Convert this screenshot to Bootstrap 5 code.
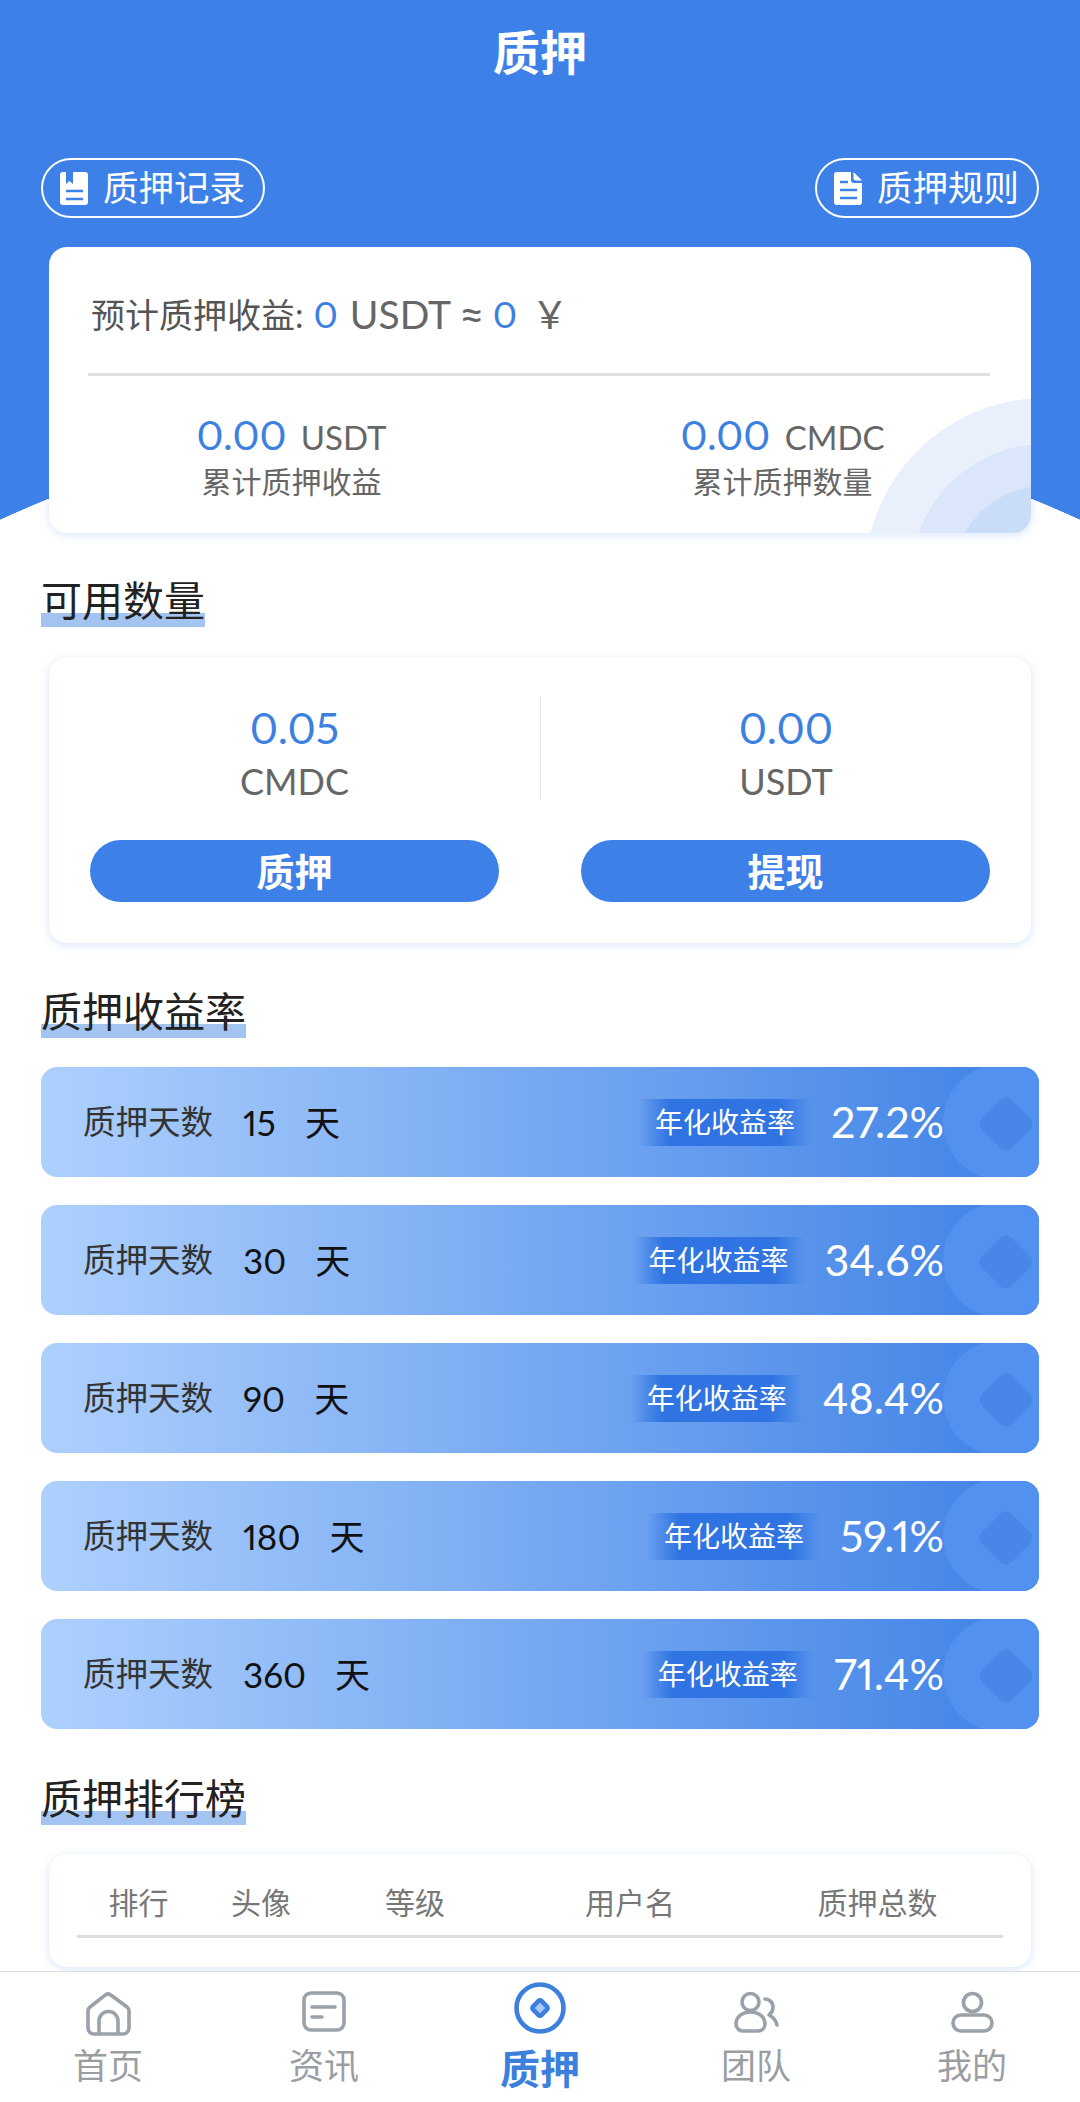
<!DOCTYPE html>
<html lang="zh-CN">
<head>
    <meta charset="UTF-8">
    <meta name="viewport" content="width=device-width, initial-scale=1.0">
    <title>质押</title>
    <link href="https://cdn.jsdelivr.net/npm/bootstrap@5.3.2/dist/css/bootstrap.min.css" rel="stylesheet">
    <style>
        body {
            height: 100vh;
            overflow: hidden;
            font-family: Lato, "Noto Sans CJK SC", sans-serif;
            font-variant-numeric: proportional-nums;
            color: #333;
        }

        .page-main {
            flex: 1 1 0;
            min-height: 0;
            overflow: hidden;
        }

        /* Blue header with the curved white cut at the bottom */
        .hero {
            height: 574px;
            padding: 22px 41px 0;
            background: radial-gradient(circle 1300px at 540px 1702px, #fff 1299.5px, #3d81e8 1300px);
        }

        .hero-title {
            margin: 0;
            font-size: 47px;
            line-height: 60px;
            font-weight: 700;
            color: #fff;
            text-align: center;
        }

        .hero-links {
            margin-top: 76px;
        }

        .pill-link {
            height: 60px;
            padding: 0 18px 0 17px;
            gap: 15px;
            border: 2px solid #fff;
            border-radius: 30px;
            font-size: 35.5px;
            color: #fff;
            text-decoration: none;
        }

        .panel {
            margin: 0 8px;
            background-color: #fff;
            border-radius: 18px;
            box-shadow: 0 2px 10px rgba(61, 129, 232, .2);
        }

        .panel-sum {
            height: 286px;
            margin-top: 29px;
            padding: 0 41px 0 39px;
            background: radial-gradient(circle at 996px 331px, #c9dcf8 92px, #dbe6fa 92px, #dbe6fa 134px, #e9f0fc 134px, #e9f0fc 180px, #fff 180px);
        }

        .sum-line {
            height: 129px;
            padding: 8px 0 0 3px;
            border-bottom: 3px solid #e0e0e0;
            font-size: 34px;
            color: #555;
        }

        .sum-line .num {
            font-size: 37px;
        }

        .sum-unit {
            font-size: 39px;
            color: #666;
        }

        .sum-approx {
            font-size: 44px;
            color: #666;
        }

        .sum-first {
            margin-left: 10px;
        }

        .sum-usdt {
            margin-left: 12px;
        }

        .sum-yen {
            margin-left: 20px;
        }

        .num {
            color: #3d81e0;
        }

        .stat-top {
            line-height: 50px;
            font-size: 33px;
            color: #666;
        }

        .stat-top .num {
            font-size: 41px;
            margin-right: 6px;
        }

        .stat-label {
            font-size: 30px;
            line-height: 39px;
            color: #666;
        }

        .stats-row {
            margin: 34px -38px 0 -42px;
        }

        .section-title {
            display: inline-block;
            height: 53px;
            margin: 0;
            font-size: 41px;
            line-height: 54px;
            font-weight: 400;
            color: #222;
            background: linear-gradient(transparent 39px, #a3c3f0 39px);
        }

        .content {
            padding: 0 41px;
        }

        .panel-balance {
            height: 286px;
            margin-top: 30px;
            padding: 40px 41px 0;
        }

        .bal-row {
            margin: 0 -41px;
        }

        .bal-col {
            height: 103px;
            padding-top: 3px;
            text-align: center;
        }

        .bal-col + .bal-col {
            border-left: 1px solid #e8e8e8;
        }

        .bal-num {
            font-size: 43px;
            line-height: 56px;
            color: #3d81e0;
        }

        .bal-unit {
            font-size: 36px;
            line-height: 50px;
            color: #666;
        }

        .bal-actions {
            margin-top: 40px;
        }

        .action-btn {
            width: 409px;
            height: 62px;
            padding: 0;
            border: 0;
            border-radius: 31px;
            background-color: #3d81e8;
            color: #fff;
            font-size: 38px;
            font-weight: 700;
            line-height: 62px;
        }

        .section-rate {
            margin-top: 42px;
        }

        .rate-list {
            margin-top: 29px;
            gap: 28px;
        }

        .rate-row {
            position: relative;
            height: 110px;
            padding: 0 95px 0 42px;
            overflow: hidden;
            border-radius: 16px;
            background: linear-gradient(90deg, #aed0fd, #3e81e6);
        }

        /* rounded block and diamond on the right end of a rate row */
        .rate-row::before {
            content: "";
            position: absolute;
            left: 902px;
            right: 0;
            top: -3px;
            bottom: -3px;
            border-radius: 58px 0 0 58px;
            background-color: #5391f0;
        }

        .rate-row::after {
            content: "";
            position: absolute;
            left: 944px;
            top: 36px;
            width: 42px;
            height: 42px;
            border-radius: 8px;
            background-color: #4a86e8;
            transform: rotate(45deg);
        }

        .rate-label {
            width: 160px;
            font-size: 32.5px;
            color: #333;
        }

        .rate-days {
            font-size: 35px;
            color: #111;
        }

        .rate-days + .rate-days {
            margin-left: 29px;
        }

        .rate-tag {
            height: 47px;
            padding: 0 16px;
            font-size: 28px;
            line-height: 47px;
            color: #fff;
            background: linear-gradient(90deg, transparent, #2f74e2 18%, #2f74e2 82%, transparent);
        }

        .rate-pct {
            position: relative;
            z-index: 1;
            margin-left: 20px;
            font-size: 43px;
            color: #fff;
        }

        .section-rank {
            margin-top: 43px;
        }

        .panel-rank {
            height: 113px;
            margin-top: 29px;
            padding: 18px 28px 0;
        }

        .rank-head {
            display: grid;
            grid-template-columns: 123px 122px 186px 244px 251px;
            height: 66px;
            border-bottom: 3px solid #dedede;
            font-size: 30px;
            line-height: 60px;
            color: #777;
            text-align: center;
        }

        .tabbar {
            height: 131px;
            border-top: 1px solid #ddd;
            background-color: #fff;
        }

        .tab-item {
            height: 100%;
            color: #9a9ea3;
            font-size: 35px;
            line-height: 44px;
            text-decoration: none;
        }

        .tab-item span {
            margin-top: 7px;
        }

        .tab-icon {
            display: block;
            width: 56px;
            height: 56px;
            margin-top: 8px;
            fill: none;
            stroke: #9aa1a9;
            stroke-width: 3.6;
            stroke-linecap: round;
            stroke-linejoin: round;
        }

        .tab-item.active {
            color: #3d7fdd;
            font-size: 40px;
            font-weight: 700;
        }

        .tab-item.active span {
            margin-top: 11px;
        }
    </style>
</head>
<body class="d-flex flex-column">
    <main class="page-main">
        <header class="hero">
            <h1 class="hero-title">质押</h1>
            <div class="hero-links d-flex justify-content-between">
                <a class="pill-link d-flex align-items-center" href="#">
                    <svg width="28" height="33" viewBox="0 0 28 33"><path fill="#fff" d="M3 0h22a3 3 0 0 1 3 3v27a3 3 0 0 1-3 3H3a3 3 0 0 1-3-3V3a3 3 0 0 1 3-3z"/><path fill="#3d81e8" d="M6 0h7v12l-3.5-3L6 12z"/><path fill="none" stroke="#3d81e8" stroke-width="2.6" d="M6 19h17M6 27h17"/></svg>
                    <span>质押记录</span>
                </a>
                <a class="pill-link d-flex align-items-center" href="#">
                    <svg width="28" height="33" viewBox="0 0 28 33"><path fill="#fff" d="M3 0h14v8a3 3 0 0 0 3 3h8v19a3 3 0 0 1-3 3H3a3 3 0 0 1-3-3V3a3 3 0 0 1 3-3z"/><path fill="#fff" d="M19.5 0 28 8.5h-6A2.500 2.500 0 0 1 19.500 6z"/><path fill="none" stroke="#3d81e8" stroke-width="2.600" d="M6 10h8M6 18h17M6 26h17"/></svg>
                    <span>质押规则</span>
                </a>
            </div>
            <section class="panel panel-sum">
                <div class="sum-line d-flex align-items-center">
                    <span>预计质押收益:</span>
                    <span class="num sum-first">0</span>
                    <span class="sum-unit sum-usdt">USDT</span>
                    <span class="sum-approx ms-2">≈</span>
                    <span class="num ms-2">0</span>
                    <span class="sum-unit sum-yen">¥</span>
                </div>
                <div class="row stats-row g-0 text-center">
                    <div class="col-6">
                        <div class="stat-top"><span class="num">0.00</span> USDT</div>
                        <div class="stat-label">累计质押收益</div>
                    </div>
                    <div class="col-6">
                        <div class="stat-top"><span class="num">0.00</span> CMDC</div>
                        <div class="stat-label">累计质押数量</div>
                    </div>
                </div>
            </section>
        </header>

        <div class="content">
            <h2 class="section-title">可用数量</h2>
            <section class="panel panel-balance">
                <div class="row bal-row g-0">
                    <div class="col-6 bal-col">
                        <div class="bal-num">0.05</div>
                        <div class="bal-unit">CMDC</div>
                    </div>
                    <div class="col-6 bal-col">
                        <div class="bal-num">0.00</div>
                        <div class="bal-unit">USDT</div>
                    </div>
                </div>
                <div class="bal-actions d-flex justify-content-between">
                    <button class="btn action-btn" type="button">质押</button>
                    <button class="btn action-btn" type="button">提现</button>
                </div>
            </section>

            <div class="section-rate"><h2 class="section-title">质押收益率</h2></div>
            <div class="rate-list d-flex flex-column">
                <div class="rate-row d-flex align-items-center">
                    <span class="rate-label">质押天数</span><span class="rate-days">15</span><span class="rate-days">天</span>
                    <span class="rate-tag ms-auto">年化收益率</span><span class="rate-pct">27.2%</span>
                </div>
                <div class="rate-row d-flex align-items-center">
                    <span class="rate-label">质押天数</span><span class="rate-days">30</span><span class="rate-days">天</span>
                    <span class="rate-tag ms-auto">年化收益率</span><span class="rate-pct">34.6%</span>
                </div>
                <div class="rate-row d-flex align-items-center">
                    <span class="rate-label">质押天数</span><span class="rate-days">90</span><span class="rate-days">天</span>
                    <span class="rate-tag ms-auto">年化收益率</span><span class="rate-pct">48.4%</span>
                </div>
                <div class="rate-row d-flex align-items-center">
                    <span class="rate-label">质押天数</span><span class="rate-days">180</span><span class="rate-days">天</span>
                    <span class="rate-tag ms-auto">年化收益率</span><span class="rate-pct">59.1%</span>
                </div>
                <div class="rate-row d-flex align-items-center">
                    <span class="rate-label">质押天数</span><span class="rate-days">360</span><span class="rate-days">天</span>
                    <span class="rate-tag ms-auto">年化收益率</span><span class="rate-pct">71.4%</span>
                </div>
            </div>

            <div class="section-rank"><h2 class="section-title">质押排行榜</h2></div>
            <section class="panel panel-rank">
                <div class="rank-head">
                    <span>排行</span><span>头像</span><span>等级</span><span>用户名</span><span>质押总数</span>
                </div>
            </section>
        </div>
    </main>

    <!-- Bottom tabs -->
    <nav class="tabbar row g-0">
        <a class="tab-item col d-flex flex-column align-items-center" href="#">
            <svg class="tab-icon" viewBox="0 0 56 56"><path d="M25.500 14.800a4 4 0 0 1 5 0L47 27a5 5 0 0 1 2 4v17a6 6 0 0 1-6 6H14a6 6 0 0 1-6-6V31a5 5 0 0 1 2-4z"/><path d="M19 53V41a9.500 9.500 0 0 1 19 0v12"/></svg>
            <span>首页</span>
        </a>
        <a class="tab-item col d-flex flex-column align-items-center" href="#">
            <svg class="tab-icon" viewBox="0 0 56 56"><rect x="8" y="13" width="40" height="37" rx="7"/><path d="M16 27h23M16 37h10"/></svg>
            <span>资讯</span>
        </a>
        <a class="tab-item active col d-flex flex-column align-items-center" href="#">
            <svg class="tab-icon" viewBox="0 0 56 56"><circle cx="28" cy="28" r="23.500" stroke="#3d7fdd" stroke-width="4.600"/><rect x="22" y="22" width="12" height="12" rx="2" fill="#a7c9f7" stroke="#3d7fdd" stroke-width="4.500" transform="rotate(45 28 28)"/></svg>
            <span>质押</span>
        </a>
        <a class="tab-item col d-flex flex-column align-items-center" href="#">
            <svg class="tab-icon" viewBox="0 0 56 56"><circle cx="22.500" cy="22" r="8.500"/><path d="M8 44c0-7 6-12 14.500-12S37 37 37 44c0 4-3 7-7 7H15c-4 0-7-3-7-7z"/><path d="M37 19c4 0 8 3 8 8s-2 6-4 8c4 2 7 6 8 10"/></svg>
            <span>团队</span>
        </a>
        <a class="tab-item col d-flex flex-column align-items-center" href="#">
            <svg class="tab-icon" viewBox="0 0 56 56"><circle cx="28.500" cy="22.500" r="9"/><rect x="9" y="35" width="39" height="16" rx="8"/></svg>
            <span>我的</span>
        </a>
    </nav>
    <script src="https://cdn.jsdelivr.net/npm/bootstrap@5.3.2/dist/js/bootstrap.bundle.min.js"></script>
</body>
</html>
